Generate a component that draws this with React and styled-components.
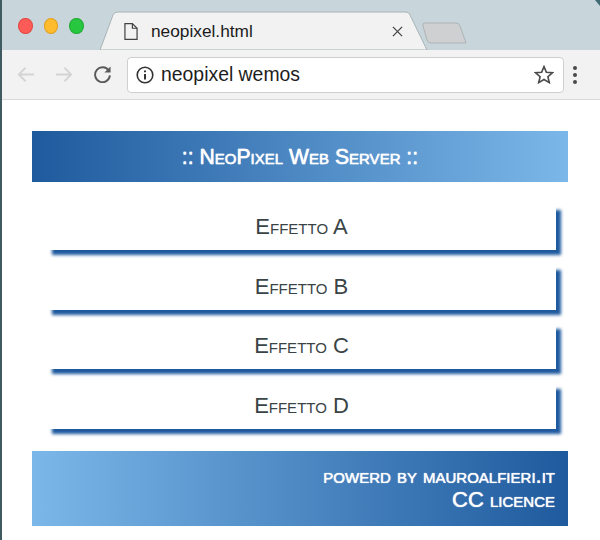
import React from 'react';
import styled, { createGlobalStyle } from 'styled-components';

const GlobalStyle = createGlobalStyle`
  html, body {
    margin: 0;
    padding: 0;
    background: #fff;
  }
  body {
    font-family: "Liberation Sans", Arial, sans-serif;
  }
`;

const Window = styled.div`
  width: 600px;
  height: 540px;
  overflow: hidden;
  position: relative;
  background: #fff;
  border-left: 2px solid #3f5a60;
  box-sizing: border-box;
`;

const TabStrip = styled.div`
  height: 50px;
  background: #c8d5da;
  display: flex;
  align-items: flex-start;
  position: relative;
`;

const TrafficLights = styled.div`
  display: flex;
  gap: 11px;
  padding: 18px 0 0 16px;
  width: 82px;
  box-sizing: border-box;
  position: relative;
`;

const Light = styled.span`
  width: 16px;
  height: 16px;
  border-radius: 50%;
  background: ${(p) => p.$color};
  box-sizing: border-box;
  border: 1px solid ${(p) => p.$edge};
`;

const TabShape = styled.svg`
  position: absolute;
  left: -2px;
  top: 0;
`;

const TabContent = styled.div`
  position: absolute;
  left: 122px;
  top: 12px;
  width: 279px;
  height: 38px;
  display: flex;
  align-items: center;
  gap: 13px;
`;

const TabTitle = styled.span`
  font-family: "Liberation Sans", Arial, sans-serif;
  font-size: 17.3px;
  color: #1b1b1b;
  flex: 1;
`;

const Toolbar = styled.div`
  height: 49px;
  background: #f2f2f2;
  border-bottom: 1px solid #d9d9d9;
  box-sizing: content-box;
  display: flex;
  align-items: center;
  padding-left: 12px;
`;

const NavButton = styled.div`
  width: 24px;
  height: 24px;
  margin-right: 14px;
  display: flex;
  align-items: center;
  justify-content: center;
`;

const AddressBar = styled.div`
  width: 437px;
  height: 36px;
  margin-left: -1px;
  background: #fff;
  border: 1px solid #cfcfcf;
  border-radius: 4px;
  box-sizing: border-box;
  display: flex;
  align-items: center;
  padding: 0 9px 0 8px;
  gap: 7px;
`;

const Url = styled.span`
  flex: 1;
  font-size: 19.4px;
  color: #1d1d1d;
`;

const Dots = styled.div`
  display: flex;
  flex-direction: column;
  gap: 3px;
  margin-left: 9px;
`;

const Dot = styled.span`
  width: 4px;
  height: 4px;
  border-radius: 50%;
  background: #4a4a4a;
`;

const Page = styled.div`
  padding: 31px 32px 0 30px;
  display: flex;
  flex-direction: column;
`;

const Header = styled.div`
  height: 51px;
  background: linear-gradient(to right, #1f5a9e, #7bb7e8);
  display: flex;
  align-items: center;
  justify-content: center;
  color: #fff;
  font-size: 21.2px;
  font-variant: small-caps;
  text-shadow: 0 0 1px #fff;
  -webkit-text-stroke: 0.3px #fff;
`;

const ButtonList = styled.div`
  display: flex;
  flex-direction: column;
  gap: 14.5px;
  padding: 23px 12px 0 15px;
`;

const EffectButton = styled.div`
  height: 45px;
  background: #fff;
  box-shadow: 5px 5px 3px #1f5a9e;
  display: flex;
  align-items: center;
  justify-content: center;
  padding-bottom: 1px;
  box-sizing: border-box;
  color: #3a4446;
  font-size: 22px;
  font-variant: small-caps;
`;

const Footer = styled.div`
  height: 75px;
  margin-top: 22px;
  background: linear-gradient(to right, #7bb7e8, #1f5a9e);
  color: #fff;
  display: flex;
  flex-direction: column;
  align-items: flex-end;
  justify-content: center;
  padding-right: 13px;
  font-size: 22px;
  line-height: 24px;
  font-variant: small-caps;
  text-shadow: 0 0 1px #fff;
  -webkit-text-stroke: 0.2px #fff;
`;

const App = () => (
  <Window>
    <GlobalStyle />
    <TabStrip>
      <TabShape width="600" height="50" viewBox="0 0 600 50">
        <path d="M100 50 L113 15 Q114 12 118 12 L406 12 Q409 12 410 15 L427 50 Z" fill="#f2f2f2" stroke="#a8b4b8" strokeWidth="1" />
        <path d="M425 23 L456 23 Q459 23 460 26 L466 43 L431 43 Q428 43 427 40 L423 26 Q422 23 425 23 Z" fill="#cfd0d2" stroke="#aeb4b6" strokeWidth="1" />
        <path d="M595 0 L600 6 V0 Z" fill="#3f6a72" />
      </TabShape>
      <TrafficLights>
        <Light $color="#fc5b57" $edge="#e5453f" />
        <Light $color="#fdbc2e" $edge="#e0a020" />
        <Light $color="#27c73f" $edge="#1fa932" />
      </TrafficLights>
      <TabContent>
        <svg width="14" height="19" viewBox="0 0 15 19" fill="none" stroke="#444" strokeWidth="1.3">
          <path d="M1 1 H9 L14 6 V18 H1 Z" />
          <path d="M9 1 V6 H14" />
        </svg>
        <TabTitle>neopixel.html</TabTitle>
        <svg width="11" height="11" viewBox="0 0 12 12" stroke="#444" strokeWidth="1.4">
          <path d="M1 1 L11 11 M11 1 L1 11" />
        </svg>
      </TabContent>
    </TabStrip>
    <Toolbar>
      <NavButton>
        <svg width="18" height="17" viewBox="0 0 20 18" fill="none" stroke="#d4d4d4" strokeWidth="2">
          <path d="M19 9 H2 M9.5 1.5 L2 9 L9.5 16.5" />
        </svg>
      </NavButton>
      <NavButton>
        <svg width="18" height="17" viewBox="0 0 20 18" fill="none" stroke="#d4d4d4" strokeWidth="2">
          <path d="M1 9 H18 M10.5 1.5 L18 9 L10.5 16.5" />
        </svg>
      </NavButton>
      <NavButton>
        <svg width="19" height="19" viewBox="0 0 20 20" fill="none">
          <path d="M16.6 6 A7.8 7.8 0 1 0 17.8 11" stroke="#5a5a5a" strokeWidth="2" />
          <path d="M18.5 1.5 V8 H12 Z" fill="#5a5a5a" />
        </svg>
      </NavButton>
      <AddressBar>
        <svg width="18" height="18" viewBox="0 0 18 18" fill="none" stroke="#333" strokeWidth="1.6">
          <circle cx="9" cy="9" r="7.8" />
          <path d="M9 8 V13.5" strokeWidth="2" />
          <path d="M9 4.5 V6.3" strokeWidth="2" />
        </svg>
        <Url>neopixel wemos</Url>
        <svg width="20" height="19" viewBox="0 0 20 19" fill="none" stroke="#4a4a4a" strokeWidth="1.6">
          <path d="M10 1.6 L12.4 7.2 L18.5 7.7 L13.9 11.7 L15.3 17.6 L10 14.5 L4.7 17.6 L6.1 11.7 L1.5 7.7 L7.6 7.2 Z" />
        </svg>
      </AddressBar>
      <Dots>
        <Dot />
        <Dot />
        <Dot />
      </Dots>
    </Toolbar>
    <Page>
      <Header>:: NeoPixel Web Server ::</Header>
      <ButtonList>
        <EffectButton>Effetto A</EffectButton>
        <EffectButton>Effetto B</EffectButton>
        <EffectButton>Effetto C</EffectButton>
        <EffectButton>Effetto D</EffectButton>
      </ButtonList>
      <Footer>
        <div>powerd by mauroalfieri.it</div>
        <div>CC licence</div>
      </Footer>
    </Page>
  </Window>
);

export default App;
